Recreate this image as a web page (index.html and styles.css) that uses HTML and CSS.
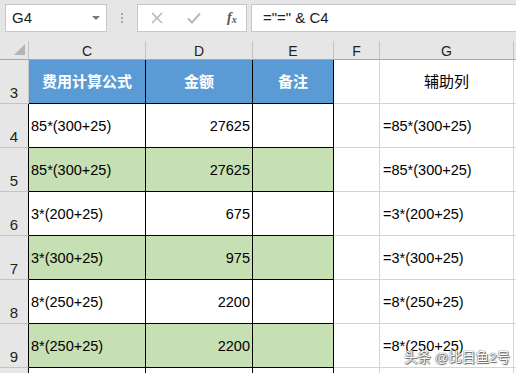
FILE: index.html
```html
<!DOCTYPE html>
<html lang="zh-CN">
<head>
    <meta charset="UTF-8">
    <meta name="viewport" content="width=device-width, initial-scale=1.0">
    <title>辅助列</title>
    <link rel="stylesheet" href="styles.css">
</head>
<body>
    <div class="toolbar">
        <div class="name-box">
            <span>G4</span>
            <span class="caret"></span>
        </div>
        <div class="grip"><i></i><i></i><i></i></div>
        <div class="fn-box">
            <svg width="12" height="12" viewBox="0 0 12 12"><path d="M1 1 L11 11 M11 1 L1 11" stroke="#b9b9b9" stroke-width="1.6" fill="none"/></svg>
            <svg width="14" height="12" viewBox="0 0 14 12"><path d="M1 6.5 L5 10.5 L13 1.5" stroke="#b9b9b9" stroke-width="2" fill="none"/></svg>
            <span class="fx">f<sub>x</sub></span>
        </div>
        <div class="formula">="=" &amp; C4</div>
    </div>

    <div class="sheet">
        <div class="corner"><span class="tri"></span></div>
        <div class="col-head">C</div>
        <div class="col-head">D</div>
        <div class="col-head">E</div>
        <div class="col-head">F</div>
        <div class="col-head">G</div>
        <div class="col-head last"></div>

        <div class="row-head top">3</div>
        <div class="cell title">费用计算公式</div>
        <div class="cell title">金额</div>
        <div class="cell title">备注</div>
        <div class="cell plain"></div>
        <div class="cell plain center">辅助列</div>
        <div class="cell rest"></div>

        <div class="row-head">4</div>
        <div class="cell data">85*(300+25)</div>
        <div class="cell data num">27625</div>
        <div class="cell data"></div>
        <div class="cell plain"></div>
        <div class="cell plain pad">=85*(300+25)</div>
        <div class="cell rest"></div>

        <div class="row-head">5</div>
        <div class="cell data green">85*(300+25)</div>
        <div class="cell data green num">27625</div>
        <div class="cell data green"></div>
        <div class="cell plain"></div>
        <div class="cell plain pad">=85*(300+25)</div>
        <div class="cell rest"></div>

        <div class="row-head">6</div>
        <div class="cell data">3*(200+25)</div>
        <div class="cell data num">675</div>
        <div class="cell data"></div>
        <div class="cell plain"></div>
        <div class="cell plain pad">=3*(200+25)</div>
        <div class="cell rest"></div>

        <div class="row-head">7</div>
        <div class="cell data green">3*(300+25)</div>
        <div class="cell data green num">975</div>
        <div class="cell data green"></div>
        <div class="cell plain"></div>
        <div class="cell plain pad">=3*(300+25)</div>
        <div class="cell rest"></div>

        <div class="row-head">8</div>
        <div class="cell data">8*(250+25)</div>
        <div class="cell data num">2200</div>
        <div class="cell data"></div>
        <div class="cell plain"></div>
        <div class="cell plain pad">=8*(250+25)</div>
        <div class="cell rest"></div>

        <div class="row-head">9</div>
        <div class="cell data green">8*(250+25)</div>
        <div class="cell data green num">2200</div>
        <div class="cell data green"></div>
        <div class="cell plain"></div>
        <div class="cell plain pad">=8*(250+25)</div>
        <div class="cell rest"></div>

        <div class="row-head"></div>
        <div class="cell data"></div>
        <div class="cell data"></div>
        <div class="cell data"></div>
        <div class="cell plain"></div>
        <div class="cell plain"></div>
        <div class="cell rest"></div>

        <div class="watermark">头条 @比目鱼2号</div>
    </div>
</body>
</html>
```

FILE: styles.css
```css
body {
    margin: 0;
    background: #e6e6e6;
    font-family: "Liberation Sans", Arial, "Noto Sans CJK SC", sans-serif;
    font-size: 14px;
    color: #000;
    overflow: hidden;
    height: 373px;
}
.toolbar {
    display: flex;
    align-items: center;
    height: 27px;
    padding: 4px 0 0 5px;
}
.name-box {
    box-sizing: border-box;
    width: 102px;
    height: 28px;
    background: #fff;
    border: 1px solid #c8c8c8;
    display: flex;
    align-items: center;
    justify-content: space-between;
    padding: 0 6px 0 6px;
    font-size: 15px;
    color: #222;
}
.caret {
    width: 0;
    height: 0;
    border-left: 4px solid transparent;
    border-right: 4px solid transparent;
    border-top: 4px solid #777;
}
.grip {
    width: 30px;
    display: flex;
    flex-direction: column;
    align-items: center;
    gap: 2px;
}
.grip i {
    width: 2px;
    height: 2px;
    background: #a8a8a8;
}
.fn-box {
    box-sizing: border-box;
    width: 110px;
    height: 28px;
    background: #fff;
    border: 1px solid #c8c8c8;
    display: flex;
    align-items: center;
    padding: 0 0 0 13px;
}
.fn-box svg:first-child {
    margin-right: 24px;
}
.fn-box svg {
    margin-right: 26px;
}
.fx {
    font-family: "Liberation Serif", serif;
    font-style: italic;
    font-weight: bold;
    font-size: 14px;
    color: #555;
}
.fx sub {
    font-size: 10px;
    vertical-align: baseline;
    position: relative;
    top: 1px;
}
.formula {
    box-sizing: border-box;
    flex: 1;
    height: 28px;
    margin-left: 4px;
    background: #fff;
    border: 1px solid #c8c8c8;
    border-right: none;
    display: flex;
    align-items: center;
    padding-left: 11px;
    font-size: 15px;
    color: #222;
}
.sheet {
    position: relative;
    margin-top: 10px;
    display: grid;
    grid-template-columns: 29px 117px 107px 81px 46px 134px 1fr;
    grid-template-rows: 19px repeat(7, 44px) 44px;
    background: #fff;
}
.corner, .col-head {
    background: #e6e6e6;
    border-bottom: 1px solid #a6a6a6;
    box-sizing: border-box;
}
.corner {
    border-right: 1px solid #c4c4c4;
    position: relative;
}
.tri {
    position: absolute;
    right: 3px;
    bottom: 4px;
    width: 0;
    height: 0;
    border-left: 11px solid transparent;
    border-bottom: 11px solid #b5b5b5;
}
.col-head {
    border-right: 1px solid #c4c4c4;
    text-align: center;
    line-height: 18px;
    font-size: 14px;
    color: #222;
    padding-top: 1px;
}
.col-head.last {
    border-right: none;
}
.row-head {
    box-sizing: border-box;
    background: #e6e6e6;
    border-right: 1px solid #000;
    border-bottom: 1px solid #c4c4c4;
    display: flex;
    align-items: flex-end;
    justify-content: center;
    padding-bottom: 2px;
    font-size: 15px;
    color: #222;
}
.row-head.top {
    border-right-color: #c4c4c4;
}
.cell {
    box-sizing: border-box;
    display: flex;
    align-items: center;
    white-space: nowrap;
    font-size: 14.5px;
}
.title {
    background: #5b9bd5;
    color: #fff;
    font-weight: bold;
    font-size: 15px;
    justify-content: center;
    border-right: 1px solid #000;
    border-bottom: 1px solid #000;
    padding-bottom: 2px;
}
.data {
    border-right: 1px solid #000;
    border-bottom: 1px solid #000;
    padding: 0 2px;
}
.green {
    background: #c6e0b4;
}
.num {
    justify-content: flex-end;
}
.plain {
    border-right: 1px solid #d4d4d4;
    border-bottom: 1px solid #d4d4d4;
}
.center {
    justify-content: center;
    font-size: 15px;
    padding-bottom: 2px;
}
.pad {
    padding-left: 3px;
}
.rest {
    border-bottom: 1px solid #d4d4d4;
}
.watermark {
    position: absolute;
    left: 404px;
    top: 305px;
    font-size: 13.5px;
    color: #fff;
    text-shadow: 0 0 1px #555, 0 0 1px #555, 1px 1px 1px #666;
    white-space: nowrap;
}
```
